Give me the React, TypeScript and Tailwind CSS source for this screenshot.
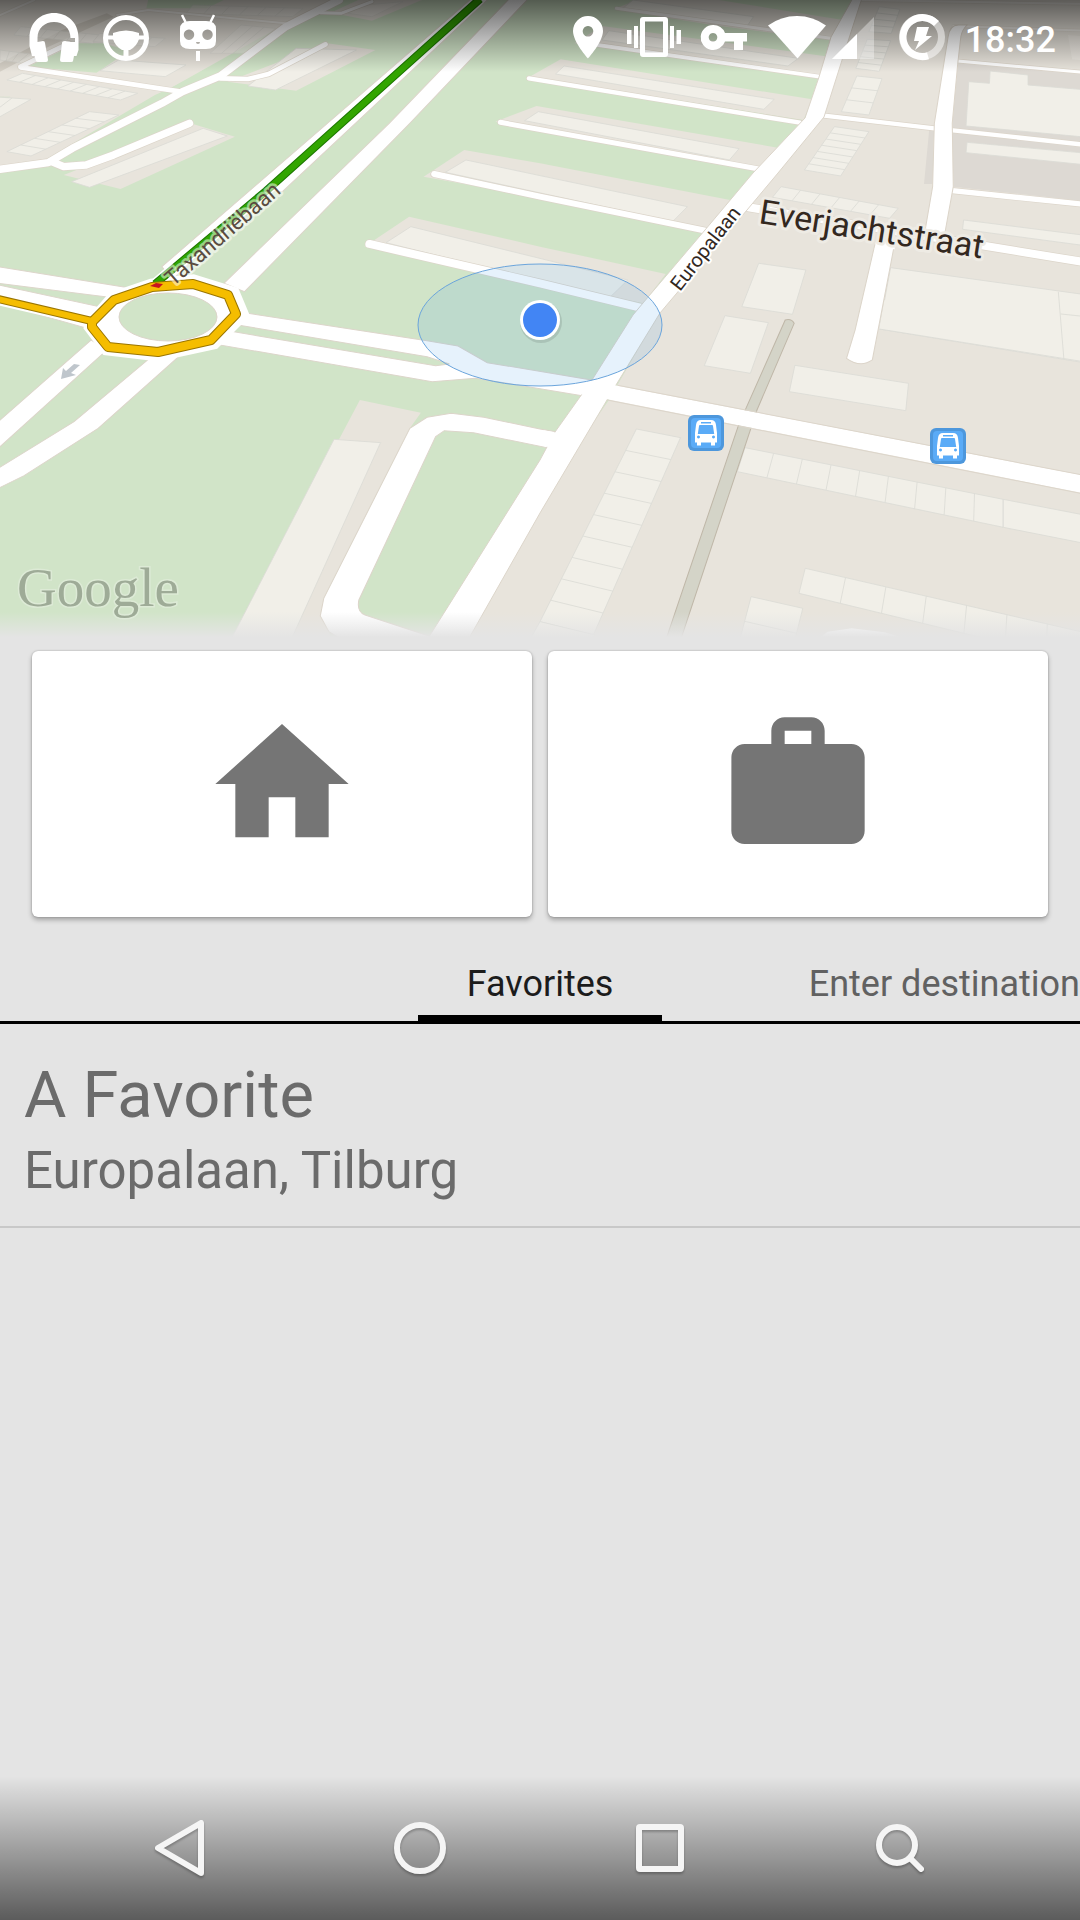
import React from "react";

type Pt = [number, number];

// The map is drawn in four tiles; each has its own local grid.
const NW = "scale(0.3444 0.3333)";
const NE = "translate(540 0) scale(0.3444 0.3333)";
const SW = "translate(0 310) scale(0.3444 0.3333)";
const SE = "translate(540 310) scale(0.3444 0.3333)";

function Houses({ p, n = 1 }: { p: [Pt, Pt, Pt, Pt]; n?: number }) {
  const mix = (a: Pt, b: Pt, t: number) => [a[0] + (b[0] - a[0]) * t, a[1] + (b[1] - a[1]) * t];
  const cuts = Array.from({ length: n - 1 }, (_, i) => (i + 1) / n);
  return (
    <g fill="#f1efe8" stroke="#dbdbd6" strokeWidth="2.5">
      <polygon points={p.map((q) => q.join(",")).join(" ")} />
      {cuts.map((t) => {
        const a = mix(p[0], p[1], t);
        const b = mix(p[3], p[2], t);
        return <line key={t} x1={a[0]} y1={a[1]} x2={b[0]} y2={b[1]} />;
      })}
    </g>
  );
}

function Bus({ x, y }: { x: number; y: number }) {
  return (
    <g transform={`translate(${x} ${y})`}>
      <rect width="36" height="36" rx="6" fill="#4d97dc" />
      <rect x="3" y="3" width="30" height="30" rx="4" fill="#5aabf7" />
      <path
        fill="#fff"
        fillRule="evenodd"
        d="M13 5h10q4.500 0 5 5l1 8v9.500h-2v3h-4v-3h-10v3h-4v-3h-2v-9.500l1-8q.5-5 5-5zM13 7h10v1.500h-10zM11 11q0-1 1-1h12q1 0 1 1l1.200 8h-16.400zM10.500 20.500a1.500 1.500 0 1 0 .01 0zM25.500 20.500a1.500 1.500 0 1 0 .01 0z"
      />
    </g>
  );
}

function MapView() {
  return (
    <svg viewBox="0 0 1080 640" className="block h-auto w-full" role="img" aria-label="Map of Europalaan, Tilburg">
      <defs>
        <linearGradient id="mapFade" x1="0" y1="0" x2="0" y2="1">
          <stop offset="0" stopColor="#e4e4e4" stopOpacity="0" />
          <stop offset="0.9" stopColor="#e4e4e4" />
          <stop offset="1" stopColor="#e4e4e4" />
        </linearGradient>
      </defs>
      <rect width="1080" height="640" fill="#d1e4c8" />

      {/* land */}
      <g fill="#e8e4dc">
        <g transform={NW}>
          <path d="M0 0H970L830 75L760 110L500 262L450 285L130 480L0 500Z" />
          <path d="M660 245L860 272L1090 150L950 130Z" />
          <path d="M960 38L1080 62L1225 0H1040Z" />
          <path d="M185 525L350 567L682 410L560 372Z" />
          <g fill="#d1e4c8">
            <path d="M430 0H650L600 25L425 25Z" />
            <path d="M80 200L225 130L300 130L375 152L280 218Z" />
            <path d="M500 262L820 85L640 235L520 275Z" />
            <path d="M0 290L30 290L0 305Z" />
            <path d="M180 480L480 320L450 290L520 300L560 350L250 490Z" />
          </g>
          <path d="M0 215L110 155L330 50L310 40L180 90L0 190Z" fill="#d5d0c6" />
        </g>
        <g transform={NE}>
          <path d="M215 28L280 0H520L880 60L840 120L500 75Z" />
          <path d="M100 130L180 78L840 170L815 225Z" />
          <path d="M-30 230L60 178L790 298L765 360Z" />
          <path d="M-130 365L-10 318L690 443L640 500Z" />
          <path d="M-338 530L-220 450L0 490L552 600L490 685Z" />
          <path d="M-510 740L-380 650L0 740L365 822L300 910Z" />
          <path d="M925 0H1568V995H300V940L640 520L800 350L870 150Z" />
          <path d="M1213 185L1568 215V602L1200 560L1197 380ZM1130 390H1145V552H1115Z" fill="#ddd9d3" />
        </g>
        <g transform={SW}>
          <path d="M1045 270L1222 308L1190 355L940 865L960 990H670L985 387Z" />
        </g>
        <g transform={SE}>
          <path d="M350 0H1568V1020H-300L200 270Z" />
        </g>
      </g>

      {/* buildings */}
      <g transform={NW}>
        <Houses p={[[65, 220], [400, 280], [350, 300], [20, 240]]} n={9} />
        <Houses p={[[345, 180], [540, 195], [480, 230], [290, 212]]} />
        <Houses p={[[260, 335], [20, 455], [90, 468], [345, 345]]} n={6} />
        <Houses p={[[-20, 290], [90, 298], [0, 350], [-60, 340]]} n={2} />
        <Houses p={[[860, 145], [1035, 150], [800, 270], [720, 258]]} />
        <Houses p={[[590, 385], [660, 408], [260, 562], [208, 545]]} />
        <g opacity="0.6">
          <Houses p={[[0, 150], [110, 165], [70, 190], [0, 180]]} n={4} />
          <Houses p={[[60, 80], [290, 105], [270, 130], [40, 105]]} n={6} />
          <Houses p={[[560, 15], [880, 25], [850, 50], [540, 40]]} n={6} />
          <Houses p={[[700, 75], [800, 85], [710, 160], [610, 160]]} n={3} />
          <Houses p={[[290, 100], [480, 115], [450, 140], [270, 125]]} n={5} />
          <Houses p={[[1060, 15], [1170, 5], [1080, 50], [1010, 40]]} />
        </g>
      </g>
      <g transform={NE}>
        <Houses p={[[270, 0], [620, 50], [600, 80], [240, 25]]} />
        <Houses p={[[200, 92], [750, 175], [720, 198], [180, 120]]} />
        <Houses p={[[70, 198], [680, 298], [650, 328], [45, 222]]} />
        <Houses p={[[-5, 335], [578, 446], [550, 480], [-45, 362]]} />
        <Houses p={[[-215, 480], [428, 620], [385, 665], [-275, 517]]} />
        <Houses p={[[-375, 680], [255, 840], [200, 895], [-447, 728]]} />
        <Houses p={[[985, 20], [955, 95], [1020, 100], [1045, 28]]} n={4} />
        <Houses p={[[950, 118], [917, 205], [985, 214], [1018, 122]]} n={5} />
        <Houses p={[[920, 228], [875, 335], [955, 345], [993, 236]]} n={3} />
        <Houses p={[[855, 380], [768, 510], [873, 528], [955, 395]]} n={7} />
        <Houses p={[[700, 560], [1040, 625], [1015, 655], [675, 592]]} n={6} />
        <Houses p={[[635, 790], [772, 810], [733, 943], [586, 920]]} />
        <Houses p={[[1018, 803], [1590, 885], [1590, 1090], [985, 987]]} />
        <Houses p={[[1240, 427], [1590, 460], [1590, 495], [1237, 458]]} />
        <Houses p={[[1230, 660], [1590, 707], [1590, 738], [1227, 688]]} />
        <path d="M1245 245L1305 250L1307 213L1417 225V255L1590 270V412L1237 378Z" fill="#f1efe8" stroke="#dbdbd6" strokeWidth="2.5" />
        <path d="M1533 105L1590 110V182L1545 178Z" fill="#f1efe8" opacity="0.6" />
      </g>
      <g transform={SW}>
        <Houses p={[[970, 388], [1105, 398], [845, 990], [670, 990]]} />
      </g>
      <g transform={SE}>
        <Houses p={[[537, 17], [663, 38], [611, 190], [477, 167]]} />
        <Houses p={[[740, 166], [1070, 220], [1062, 302], [724, 245]]} />
        <path d="M985 57L1000 -30H1590V157Z" fill="#f1efe8" />
        <path d="M985 57L1590 157M1505 -55L1521 145M1512 12L1568 18" stroke="#dbdbd6" strokeWidth="2.5" />
        <Houses p={[[280, 357], [0, 935], [155, 975], [408, 383]]} n={9} />
        <Houses p={[[0, 935], [-30, 990], [150, 990], [160, 975]]} />
        <Houses p={[[595, 413], [1345, 568], [1345, 652], [573, 485]]} n={9} />
        <Houses p={[[1345, 568], [1590, 617], [1590, 702], [1345, 652]]} />
        <Houses p={[[770, 775], [1590, 970], [1590, 1060], [752, 850]]} n={7} />
        <Houses p={[[613, 860], [763, 895], [740, 990], [580, 990]]} />
        <path d="M594 934L745 970" stroke="#dbdbd6" strokeWidth="2.5" />
        <path d="M712 30Q730 25 738 40L630 300L405 1000H362L575 350L598 295Z" fill="#d4d4c8" stroke="#bfb7a8" strokeWidth="3" />
      </g>

      {/* streets */}
      <g fill="none" strokeLinecap="round" strokeLinejoin="round">
        {[
          { c: "#dcd5ca", d: 4 },
          { c: "#ffffff", d: 0 },
        ].map(({ c, d }) => (
          <g key={c} stroke={c}>
            <g transform={NW}>
              <g strokeWidth={22 + d}>
                <path d="M0 508L140 488L210 445L470 310L530 275L640 228L830 80L985 0" />
                <path d="M150 485L185 500L250 495L330 465L550 370" />
                <path d="M60 202L525 275" strokeWidth={14 + d} />
                <path d="M640 235L720 237L780 222L945 133" strokeWidth={14 + d} />
                <path d="M930 38L990 40L1080 5" strokeWidth={9 + d} />
                <path d="M60 200L200 130" strokeWidth={14 + d} />
              </g>
              <path d="M0 45L100 0M340 45L430 30L830 70" strokeWidth={6 + d} opacity="0.6" />
            </g>
            <g transform={NE}>
              <path d="M222 25L845 115" strokeWidth={9 + d} opacity="0.7" />
              <path d="M135 130L812 230" strokeWidth={11 + d} />
              <path d="M-32 235L755 368" strokeWidth={13 + d} />
              <path d="M-115 367L640 508" strokeWidth={15 + d} />
              <path d="M-307 522L0 590L480 692" strokeWidth={18 + d} />
              <path d="M-495 732L0 850L300 925" strokeWidth={24 + d} />
              <path d="M825 347L1145 385L1580 434" strokeWidth={13 + d} />
              <path d="M1197 572L1590 614" strokeWidth={16 + d} />
              <path d="M1213 183L1590 218" strokeWidth={9 + d} />
              <path d="M605 622L1590 788" strokeWidth={24 + d} />
              <path d="M930 0L1590 12M1200 78L1590 92" strokeWidth={6 + d} opacity="0.5" />
            </g>
          </g>
        ))}
      </g>
      <g fill="#fff" stroke="#dcd5ca" strokeWidth="3">
        <g transform={NW}>
          <path d="M1480 -5H1535L1190 370L710 875L650 850L1130 370Z" />
          <path d="M1370 -5H1420L820 575L770 570L500 840L470 800Z" />
          <path d="M-5 800L400 868L340 895L-5 850Z" />
          <path d="M-5 855L310 925L270 990L-5 910Z" />
        </g>
        <g transform={NE}>
          <path d="M1185 110Q1190 75 1215 75H1240Q1225 90 1222 110L1213 190L1197 370L1200 560L1172 720L1115 710L1140 560L1145 370Z" />
          <path d="M972 735L1028 740L965 1080Q930 1105 890 1075L915 990Z" />
          <path d="M1115 697L1178 708L1170 728L1110 716ZM975 725H1030V748H972Z" stroke="none" />
        </g>
        <g transform={SW}>
          <path d="M265 90L310 120L-5 415V335Z" />
          <path d="M440 140L535 125L285 355L70 497L-5 535V475L215 335Z" />
          <path d="M690 5L1240 92L1330 108L1415 158L1730 212L1690 257L1568 236L1380 205L1255 215L600 98L620 55L1265 167L1305 162L1240 140L690 45Z" />
          <path d="M1640 370L1568 357L1405 322L1310 310L1240 322L1190 355L940 865L930 918L955 965L1010 1000H1300L1245 978L1060 915Q1035 905 1042 870L1265 380L1290 362L1375 368L1620 420Z" />
        </g>
        <path d="M853 -2L831 37L819 77L805 118L753 173L705 230L643 303L633 315L592 380L555 432L540 460L427 640H468L540 513L607 400L616 385L660 313L747 210L778 173L824 117L843 57L862 -2Z" strokeWidth="1" />
        <g transform={SE} stroke="none">
          <path d="M100 208L150 212L225 227L1580 497V550L195 268L118 253Z" />
          <path d="M10 361L52 369L40 414L12 409Z" />
          <path d="M225 226L1580 496M195 270L1580 552" stroke="#dcd5ca" strokeWidth="3" />
          <path d="M805 990L835 965L905 955L1000 967L1075 990Z" />
        </g>
      </g>

      {/* roundabout and traffic */}
      <path d="M95 322L114 300L152 287L193 283L232 295L240 314L213 341L158 353L108 347L93 327Z" fill="#fff" stroke="#fff" strokeWidth="17" />
      <ellipse cx="168" cy="317" rx="49" ry="24" fill="#d1e4c8" stroke="#dcd5ca" />
      <g fill="none" strokeLinejoin="round">
        <path d="M480 -1L266 191L155 284" stroke="#fff" strokeWidth="11" />
        <path d="M480 -1L266 191L155 284" stroke="#1c7500" strokeWidth="8" />
        <path d="M480 -1L266 191L155 284" stroke="#32a500" strokeWidth="6" />
        <path d="M-2 299L96 322" stroke="#fff" strokeWidth="12" />
        <g stroke="#9a7500" strokeWidth="10">
          <path d="M-2 299L96 322" strokeWidth="8" />
          <path d="M92 322L114 300L152 287L193 284L228 295L236 314L211 340L158 352L108 347L92 327Z" />
        </g>
        <g stroke="#f5bd00" strokeWidth="8">
          <path d="M-2 299L96 322" strokeWidth="6" />
          <path d="M92 322L114 300L152 287L193 284L228 295L236 314L211 340L158 352L108 347L92 327Z" />
        </g>
      </g>
      <path d="M150 286L156 283L163 284L159 288Z" fill="#c8141e" />
      <path d="M61 379L63 368L66 371L74 364L80 365L71 373L76 375Z" fill="#bfc6cc" />

      <Bus x={688} y={415} />
      <Bus x={930} y={428} />

      {/* current position */}
      <ellipse cx="540" cy="325" rx="122" ry="61" fill="#3a9be6" fillOpacity="0.13" stroke="#6ba5dc" strokeWidth="1" />
      <circle cx="541" cy="322" r="21" fill="#000" opacity="0.1" />
      <circle cx="540" cy="320" r="20" fill="#fff" />
      <circle cx="540" cy="320" r="17" fill="#4285f4" />

      {/* labels */}
      <g fontFamily="Roboto, sans-serif" paintOrder="stroke" strokeLinejoin="round">
        <text x="758" y="223" transform="rotate(9 758 223)" fontSize="34" fill="#33281f" stroke="#eeebe4" strokeWidth="6">
          Everjachtstraat
        </text>
        <text x="680" y="292" transform="rotate(-52 680 292)" fontSize="20" fill="#33281f" stroke="#fff" strokeWidth="4">
          Europalaan
        </text>
        <text x="173" y="287" transform="rotate(-41 173 287)" fontSize="22" fill="#5a4b40" stroke="#fff" strokeOpacity="0.5" strokeWidth="5">
          Taxandriëbaan
        </text>
      </g>

      <rect y="612" width="1080" height="28" fill="url(#mapFade)" />
      <text x="17" y="606" fontSize="55" fontFamily="'Liberation Serif', serif" fill="#9eab97" stroke="#e4eee0" strokeOpacity="0.6" strokeWidth="3" paintOrder="stroke">
        Google
      </text>
    </svg>
  );
}

function StatusBar() {
  return (
    <header className="absolute inset-x-0 top-0 flex h-[72px] items-center justify-between bg-linear-to-b from-black/60 to-transparent pr-6 pl-[18px] text-white">
      <div className="flex">
        <svg viewBox="18 0 72 72" className="h-[72px] w-[72px]" fill="currentColor" aria-label="Headphones">
          <path d="M29.500 38C29.500 22 41 13 54 13S78.500 22 78.500 38V50L76.500 56H74L73 61Q73 62 71 62H62Q60 62 60 60L62 43Q62 41 65 41L70 42H75V38H70.500C70.500 28 63 22 54 22S37.500 28 37.500 38V42L43 41Q45 41 45 43L48 60Q48 62 46 62H38Q36 62 36 61L34.500 56H32L29.500 46Z" />
        </svg>
        <svg viewBox="90 0 72 72" className="h-[72px] w-[72px]" fill="none" stroke="currentColor" aria-label="Driving">
          <circle cx="126" cy="38" r="20.500" strokeWidth="5" />
          <path d="M106 37.500H146" strokeWidth="4" />
          <path d="M126 46V59" strokeWidth="5" />
          <path d="M113 33Q126 28 139 33V39Q137 46 130 50H122Q115 46 113 39Z" fill="currentColor" stroke="none" />
        </svg>
        <svg viewBox="162 0 72 72" className="h-[72px] w-[72px]" fill="currentColor" aria-label="CyanogenMod">
          <path d="M182 15L185.500 22M214 15L210.500 22" stroke="currentColor" strokeWidth="2.5" />
          <path
            fillRule="evenodd"
            d="M190 21H206Q216 21 216 29V41Q216 49 206 49H190Q180 49 180 41V29Q180 21 190 21ZM189 29.500a5.200 5.200 0 1 0 .01 0ZM207.500 29.500a5.200 5.200 0 1 0 .01 0ZM196 42H200Q200 44 198 44T196 42Z"
          />
          <rect x="196" y="51" width="4" height="10" />
        </svg>
      </div>
      <div className="flex items-center">
        <svg viewBox="555 0 66 72" className="h-[72px] w-[66px]" fill="currentColor" aria-label="Location">
          <path fillRule="evenodd" d="M588 16A15 15 0 0 0 573 31C573 42 588 58.500 588 58.500S603 42 603 31A15 15 0 0 0 588 16ZM588 26a5.300 5.300 0 1 1-.01 0Z" />
        </svg>
        <svg viewBox="621 0 66 72" className="h-[72px] w-[66px]" fill="currentColor" aria-label="Vibrate">
          <path fillRule="evenodd" d="M643 17H665Q668 17 668 20V54Q668 57 665 57H643Q640 57 640 54V20Q640 17 643 17ZM645 21.500V52.500H663V21.500Z" />
          <path d="M627 30h4.500v14h-4.500zM634 26h4v22h-4zM670 26h4v22h-4zM676.500 30h4.500v14h-4.500z" />
        </svg>
        <svg viewBox="687 0 72 72" className="h-[72px] w-[72px]" fill="currentColor" aria-label="VPN">
          <path fillRule="evenodd" d="M713 25A12.500 12.500 0 1 0 725 41.500H734V50H743V41.500H747V33H725A12.500 12.500 0 0 0 713 25ZM713 33a4.300 4.300 0 1 1-.01 0Z" />
        </svg>
        <svg viewBox="759 0 70 72" className="h-[72px] w-[70px]" fill="currentColor" aria-label="Wi-Fi">
          <path d="M768 25.500Q781 16 797 16T826 25.500L797.500 58.500Z" />
        </svg>
        <svg viewBox="829 0 55 72" className="h-[72px] w-[55px]" fill="currentColor" aria-label="Signal">
          <path d="M832 59L874 17V59Z" opacity="0.35" />
          <path d="M832 59L857 34V59Z" />
        </svg>
        <svg viewBox="884 0 75 72" className="h-[72px] w-[75px]" fill="currentColor" aria-label="Charging">
          <circle cx="922" cy="37" r="19.500" fill="none" stroke="currentColor" strokeWidth="7" opacity="0.5" />
          <path d="M936.500 23.500A19.500 19.500 0 1 0 928 55.800" fill="none" stroke="currentColor" strokeWidth="7" />
          <path d="M917 27H929L926 36H932L915 50L919 41H914Z" />
        </svg>
        <time className="pt-2 pl-1.5 text-4xl leading-[42px] font-medium">18:32</time>
      </div>
    </header>
  );
}

const shortcuts = [
  { label: "Home", d: "M10 20v-6h4v6h5v-8h3L12 3 2 12h3v8z" },
  {
    label: "Work",
    d: "M20 6h-4V4c0-1.11-.89-2-2-2h-4c-1.11 0-2 .89-2 2v2H4c-1.11 0-1.990.89-1.990 2L2 19c0 1.110.89 2 2 2h16c1.110 0 2-.89 2-2V8c0-1.110-.89-2-2-2zm-6 0h-4V4h4v2z",
  },
];

const navigation = [
  { label: "Back", shape: <path d="M61 11V61L18 36Z" /> },
  { label: "Home", shape: <circle cx="40" cy="36" r="23" /> },
  { label: "Recent apps", shape: <rect x="19" y="15" width="42" height="42" rx="1" /> },
  {
    label: "Search",
    shape: (
      <>
        <circle cx="37" cy="33" r="18" />
        <path d="M50 46L61 57" strokeLinecap="round" />
      </>
    ),
  },
];

export default function App() {
  return (
    <div className="flex min-h-screen flex-col overflow-x-hidden bg-[#e4e4e4] font-[Roboto,sans-serif]">
      <div className="relative">
        <MapView />
        <StatusBar />
      </div>

      <main className="flex flex-col">
        <div className="grid grid-cols-2 gap-4 px-8 pt-[11px] pb-6">
          {shortcuts.map((s) => (
            <button
              key={s.label}
              type="button"
              aria-label={s.label}
              className="flex h-[266px] items-center justify-center rounded-md bg-white shadow-[0_3px_5px_rgba(0,0,0,0.28),0_0_2px_rgba(0,0,0,0.25)]"
            >
              <svg viewBox="0 0 24 24" className="h-40 w-40 fill-[#757575]">
                <path d={s.d} />
              </svg>
            </button>
          ))}
        </div>

        <div role="tablist" className="grid grid-cols-[1fr_auto_1fr] border-b-[3px] border-black text-4xl leading-[42px]">
          <span />
          <button type="button" role="tab" aria-selected="true" className="border-b-[6px] border-black px-[49px] pt-[22px] pb-2.5 text-[#1c1c1c]">
            Favorites
          </button>
          <button type="button" role="tab" aria-selected="false" className="justify-self-end pt-[22px] pb-4 whitespace-nowrap text-[#616161]">
            Enter destination
          </button>
        </div>

        <ul>
          <li className="border-b-2 border-[#c8c8c8]">
            <button type="button" className="block w-full px-6 pt-[33px] pb-[18px] text-left text-[#6b6b6b]">
              <span className="block text-[65px] leading-[76px]">A Favorite</span>
              <span className="block text-[51px] leading-[75px]">Europalaan, Tilburg</span>
            </button>
          </li>
        </ul>
      </main>

      <nav className="mt-auto flex h-36 items-center justify-center bg-linear-to-b from-transparent to-black/60">
        {navigation.map((n) => (
          <button key={n.label} type="button" aria-label={n.label} className="flex w-60 justify-center">
            <svg
              viewBox="0 0 80 72"
              className="h-[72px] w-20 fill-none stroke-[#f5f5f5] drop-shadow-[0_2px_1px_rgba(0,0,0,0.25)]"
              strokeWidth="6"
              strokeLinejoin="round"
            >
              {n.shape}
            </svg>
          </button>
        ))}
      </nav>
    </div>
  );
}
